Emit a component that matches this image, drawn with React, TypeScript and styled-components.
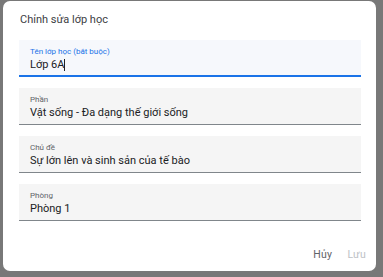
import React from 'react';
import styled, { createGlobalStyle } from 'styled-components';

const GlobalStyle = createGlobalStyle`
  html, body {
    margin: 0;
    padding: 0;
    background: #787878;
    font-family: Roboto, "Noto Sans", Arial, sans-serif;
  }
`;

type Field = { label: string; value: string; active?: boolean };

const fields: Field[] = [
  { label: 'Tên lớp học (bắt buộc)', value: 'Lớp 6A', active: true },
  { label: 'Phần', value: 'Vật sống - Đa dạng thế giới sống' },
  { label: 'Chủ đề', value: 'Sự lớn lên và sinh sản của tế bào' },
  { label: 'Phòng', value: 'Phòng 1' },
];

export default function App() {
  return (
    <>
      <GlobalStyle />
      <Page>
        <Dialog>
          <Title>Chỉnh sửa lớp học</Title>
          <FieldList>
            {fields.map((f) => (
              <FieldBox key={f.label} active={f.active}>
                <Label active={f.active}>{f.label}</Label>
                <Value>
                  {f.value}
                  {f.active && <Caret />}
                </Value>
              </FieldBox>
            ))}
          </FieldList>
          <Actions>
            <TextButton>Hủy</TextButton>
            <TextButton disabled>Lưu</TextButton>
          </Actions>
        </Dialog>
      </Page>
    </>
  );
}

const Page = styled.div`
  width: 383px;
  height: 277px;
  padding: 1px 7px 6px 3px;
  box-sizing: border-box;
`;

const Dialog = styled.div`
  height: 270px;
  background: #fff;
  border-radius: 7px;
  padding: 0 15px 0 16px;
  box-sizing: border-box;
  display: flex;
  flex-direction: column;
`;

const Title = styled.div`
  margin: 11px 0 0 1px;
  font-size: 11px;
  line-height: 16px;
  color: #3c4043;
`;

const FieldList = styled.div`
  margin-top: 12px;
  display: flex;
  flex-direction: column;
  gap: 11px;
`;

const FieldBox = styled.div<{ active?: boolean }>`
  height: 37px;
  box-sizing: border-box;
  background: ${(p) => (p.active ? '#f6f8fc' : '#f5f5f5')};
  border-bottom: ${(p) => (p.active ? '2px solid #1a73e8' : '1px solid #80868b')};
  padding: 7px 11px 0;
  display: flex;
  flex-direction: column;
`;

const Label = styled.div<{ active?: boolean }>`
  font-size: 8px;
  line-height: 9px;
  color: ${(p) => (p.active ? '#1a73e8' : '#5f6368')};
`;

const Value = styled.div`
  margin-top: 2px;
  font-size: 11px;
  line-height: 14px;
  color: #202124;
  display: flex;
  align-items: center;
`;

const Caret = styled.span`
  display: inline-block;
  width: 1px;
  height: 12px;
  background: #202124;
`;

const Actions = styled.div`
  margin-top: auto;
  margin-bottom: 9px;
  margin-right: -5px;
  display: flex;
  justify-content: flex-end;
  gap: 15px;
`;

const TextButton = styled.button`
  border: none;
  background: none;
  padding: 0;
  font-family: inherit;
  font-size: 10.5px;
  font-weight: 400;
  line-height: 14px;
  color: #5f6368;
  letter-spacing: 0.3px;

  &:disabled {
    color: #bdc1c6;
  }
`;
